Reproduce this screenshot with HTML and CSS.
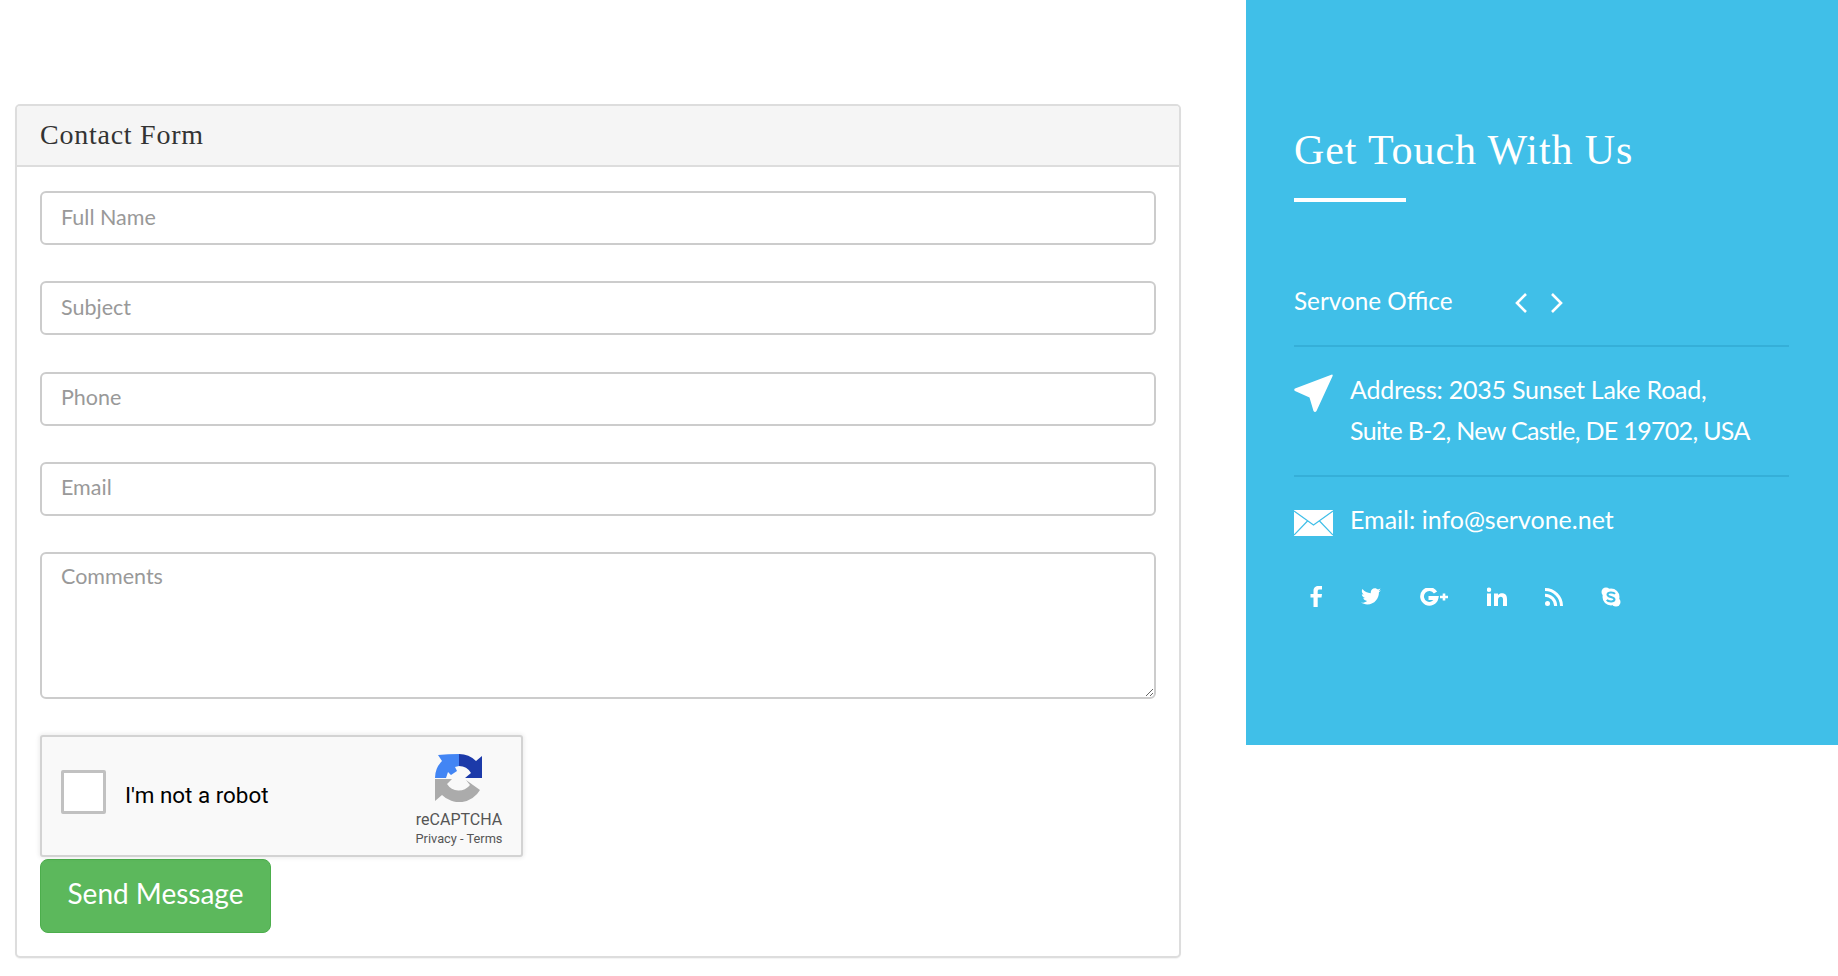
FILE: index.html
```html
<!DOCTYPE html>
<html lang="en">
<head>
<meta charset="utf-8">
<title>Contact</title>
<link rel="stylesheet" href="styles.css">
</head>
<body>
<main class="page">
  <section class="left">
    <div class="panel">
      <h2 class="panel-head">Contact Form</h2>
      <form class="panel-body">
        <input class="field" type="text" placeholder="Full Name">
        <input class="field" type="text" placeholder="Subject">
        <input class="field" type="text" placeholder="Phone">
        <input class="field" type="text" placeholder="Email">
        <textarea class="field area" placeholder="Comments"></textarea>
        <div class="captcha">
          <span class="check"></span>
          <span class="robot">I'm not a robot</span>
          <div class="brand">
            <svg class="logo" viewBox="0 0 48 48" width="48" height="48">
              <path fill="#1c3aa9" d="M24 0 A24 24 0 0 1 41 7 L47 2 V24 H30 L36 19 A14 14 0 0 0 24 12 Z"/>
              <path fill="#4285f4" d="M24 0 V12 L20 13 L22 17 L16 21 L13 18 L11 24 H0 A24 24 0 0 1 7 7 L3 1 Q13 0 24 0 Z"/>
              <path fill="#ababab" d="M0 25 H17 L12 30 A14 14 0 0 0 35 31 L31 26 L45 36 A24 24 0 0 1 7 41 L0 47 Z"/>
            </svg>
            <span class="brand-name">reCAPTCHA</span>
            <span class="brand-links">Privacy - Terms</span>
          </div>
        </div>
        <button class="send" type="button">Send Message</button>
      </form>
    </div>
  </section>
  <aside class="touch">
    <h1 class="touch-title">Get Touch With Us</h1>
    <div class="rule"></div>
    <div class="office">
      <span class="office-name">Servone Office</span>
      <span class="arrows">
        <svg width="14" height="22" viewBox="0 0 14 22"><path d="M12 2 L3 11 L12 20" fill="none" stroke="#fff" stroke-width="2.6"/></svg>
        <svg width="14" height="22" viewBox="0 0 14 22"><path d="M2 2 L11 11 L2 20" fill="none" stroke="#fff" stroke-width="2.6"/></svg>
      </span>
    </div>
    <div class="info info-address">
      <svg class="info-icon" width="39" height="39" viewBox="0 0 39 39"><path fill="#fff" d="M38 0.5 Q39 0.5 38.6 2 L22.5 37 Q21 39 19.5 37 L15.5 23.5 L1 17 Q-0.5 15.5 1 14.5z"/></svg>
      <p class="info-text"><span class="line-one">Address: 2035 Sunset Lake Road,</span><br><span class="line-two">Suite B-2, New Castle, DE 19702, USA</span></p>
    </div>
    <div class="info info-mail">
      <svg class="info-icon mail" width="39" height="26" viewBox="0 0 39 26"><path fill="#fff" d="M0 0 H39 V26 H0z"/><path d="M0 1 L19.5 15 L39 1 M0 25 L13.5 11 M39 25 L25.5 11" fill="none" stroke="#40bfe8" stroke-width="1.2"/></svg>
      <p class="info-text">Email: info@servone.net</p>
    </div>
    <div class="social">
      <svg width="13" height="21" viewBox="0 0 13 21"><path fill="#fff" d="M3.5 21 V11.5 H0.5 V8 H3.5 V5 C3.5 1.5 5.5 0 8.5 0 H12 V3.5 H9.500 C8.300 3.500 7.700 4 7.700 5.200 V8 H12 L11.500 11.500 H7.700 V21z"/></svg>
      <svg width="20" height="17" viewBox="0 0 24 20"><path fill="#fff" d="M24 2.4c-.9.4-1.8.7-2.8.8 1-.6 1.8-1.6 2.2-2.7-1 .6-2 1-3.100 1.200C19.300.7 18 0 16.600 0c-2.700 0-4.900 2.200-4.900 4.900 0 .4 0 .8.100 1.100C7.700 5.800 4.100 3.900 1.700.9c-.4.700-.7 1.600-.7 2.500 0 1.700.9 3.200 2.200 4.100-.8 0-1.600-.2-2.200-.6v.1c0 2.400 1.700 4.400 3.900 4.800-.4.100-.8.200-1.300.2-.3 0-.6 0-.9-.1.6 2 2.400 3.400 4.600 3.400-1.700 1.300-3.800 2.100-6.100 2.100-.4 0-.8 0-1.200-.1C2.200 18.700 4.800 19.500 7.500 19.500c9.100 0 14-7.500 14-14v-.6c1-.7 1.800-1.600 2.500-2.500z"/></svg>
      <svg class="gplus" width="30" height="18" viewBox="0 0 30 18"><path d="M16.500 4.500 A7.300 7.300 0 1 0 17.500 10 H9.500" fill="none" stroke="#fff" stroke-width="3.800"/><path d="M21 9 H29 M25 5.500 V12.500" stroke="#fff" stroke-width="2.600"/></svg>
      <svg width="20" height="19" viewBox="0 0 20 19"><path fill="#fff" d="M0 6.500 H4 V19 H0z M2 0.500 A2.200 2.200 0 1 1 2 5 A2.200 2.200 0 0 1 2 0.500z M7 6.500 H11 V8.200 C12 6.800 13.300 6.200 15 6.200 C18.300 6.200 20 8.300 20 12 V19 H16 V12.500 C16 10.700 15.300 9.700 13.800 9.700 C12.300 9.700 11 10.700 11 12.800 V19 H7z"/></svg>
      <svg width="18" height="18" viewBox="0 0 18 18"><circle cx="2.500" cy="15.500" r="2.500" fill="#fff"/><path d="M0 7.300 A10.700 10.700 0 0 1 10.700 18 M0 1.500 A16.500 16.500 0 0 1 16.500 18" fill="none" stroke="#fff" stroke-width="3"/></svg>
      <svg width="20" height="20" viewBox="0 0 20 20"><circle cx="10" cy="10" r="8.500" fill="#fff"/><circle cx="5" cy="5" r="4.500" fill="#fff"/><circle cx="15" cy="15" r="4.500" fill="#fff"/><path d="M14 6.800 C13 5.500 7 4.500 6.500 7.500 C6.200 10.500 13.800 9.500 13.500 12.500 C13 15.500 7 14.500 5.800 12.800" fill="none" stroke="#40bfe8" stroke-width="2"/></svg>
    </div>
  </aside>
</main>
</body>
</html>
```

FILE: styles.css
```css
* { box-sizing: border-box; }
html, body { margin: 0; height: 100%; background: #fff; }
body { font-family: Lato, "Noto Sans", sans-serif; overflow: hidden; }
.page { display: flex; align-items: flex-start; width: 1838px; height: 976px; }
.left { width: 1246px; padding: 104px 65px 0 15px; }
.panel { border: 2px solid #ddd; border-radius: 5px; box-shadow: 0 1px 1px rgba(0,0,0,.05); height: 854px; background: #fff; }
.panel-head { margin: 0; height: 61px; padding: 13px 23px 0; background: #f5f5f5; border-bottom: 2px solid #ddd; font: 400 28px/32px "Liberation Serif", "DejaVu Serif", serif; letter-spacing: 0.75px; color: #333; border-radius: 3px 3px 0 0; }
.panel-body { display: flex; flex-direction: column; align-items: flex-start; padding: 24px 23px 0; }
.field { display: block; width: 100%; height: 54px; margin-bottom: 36.25px; padding: 0 19px 3px; border: 2px solid #ccc; border-radius: 6px; font: 400 21.5px Lato, "Noto Sans", sans-serif; color: #555; background: #fff; outline: none; }
.field::placeholder { color: #999; opacity: 1; }
.area { height: 147px; padding-top: 9px; resize: vertical; }
.captcha { display: flex; align-items: center; position: relative; width: 483px; height: 122px; background: #f9f9f9; border: 2px solid #d3d3d3; border-radius: 3px; box-shadow: 0 0 4px 1px rgba(0,0,0,.08); color: #000; }
.check { width: 45px; height: 44px; margin: -8px 0 0 19px; background: #fff; border: 3px solid #c1c1c1; border-radius: 2px; }
.robot { margin: -2px 0 0 19px; font: 400 22.4px Roboto, sans-serif; }
.brand { display: flex; flex-direction: column; align-items: center; position: absolute; right: 18px; top: 17px; width: 88px; color: #555; font-family: Roboto, sans-serif; }
.logo { display: block; }
.brand-name { margin-top: 8px; font-size: 16px; line-height: 20px; }
.brand-links { font-size: 12.8px; line-height: 18px; white-space: nowrap; }
.send { margin-top: 2px; padding: 0 0 6px; width: 231px; height: 74px; background: #5cb85c; border: 1px solid #4cae4c; border-radius: 8px; color: #fff; font: 400 28px Lato, "Noto Sans", sans-serif; }
.touch { width: 592px; height: 745px; padding: 125px 49px 0 48px; background: #40bfe8; color: #fff; }
.touch-title { margin: 0; font: 400 42px/50px "Liberation Serif", "DejaVu Serif", serif; letter-spacing: 0.9px; }
.rule { width: 112px; height: 4px; margin-top: 23px; background: #fff; }
.office { display: flex; align-items: center; height: 46px; margin-top: 75px; }
.office-name { width: 219px; font-size: 24.3px; }
.arrows { display: flex; gap: 22px; margin-top: 5px; margin-left: 1px; }
.info { display: flex; gap: 17px; border-top: 2px solid #35afd8; }
.info-address { height: 130px; margin-top: 22px; padding-top: 27px; }
.info-mail { padding-top: 27px; height: 110px; }
.info-icon { flex: none; }
.mail { margin-top: 6px; }
.info-text { margin: -5px 0 0; font-size: 25px; line-height: 41px; white-space: nowrap; }
.line-one { letter-spacing: -0.23px; }
.line-two { letter-spacing: -0.68px; }
.social { display: flex; align-items: center; gap: 38px; margin: 1px 0 0 16px; }
```
